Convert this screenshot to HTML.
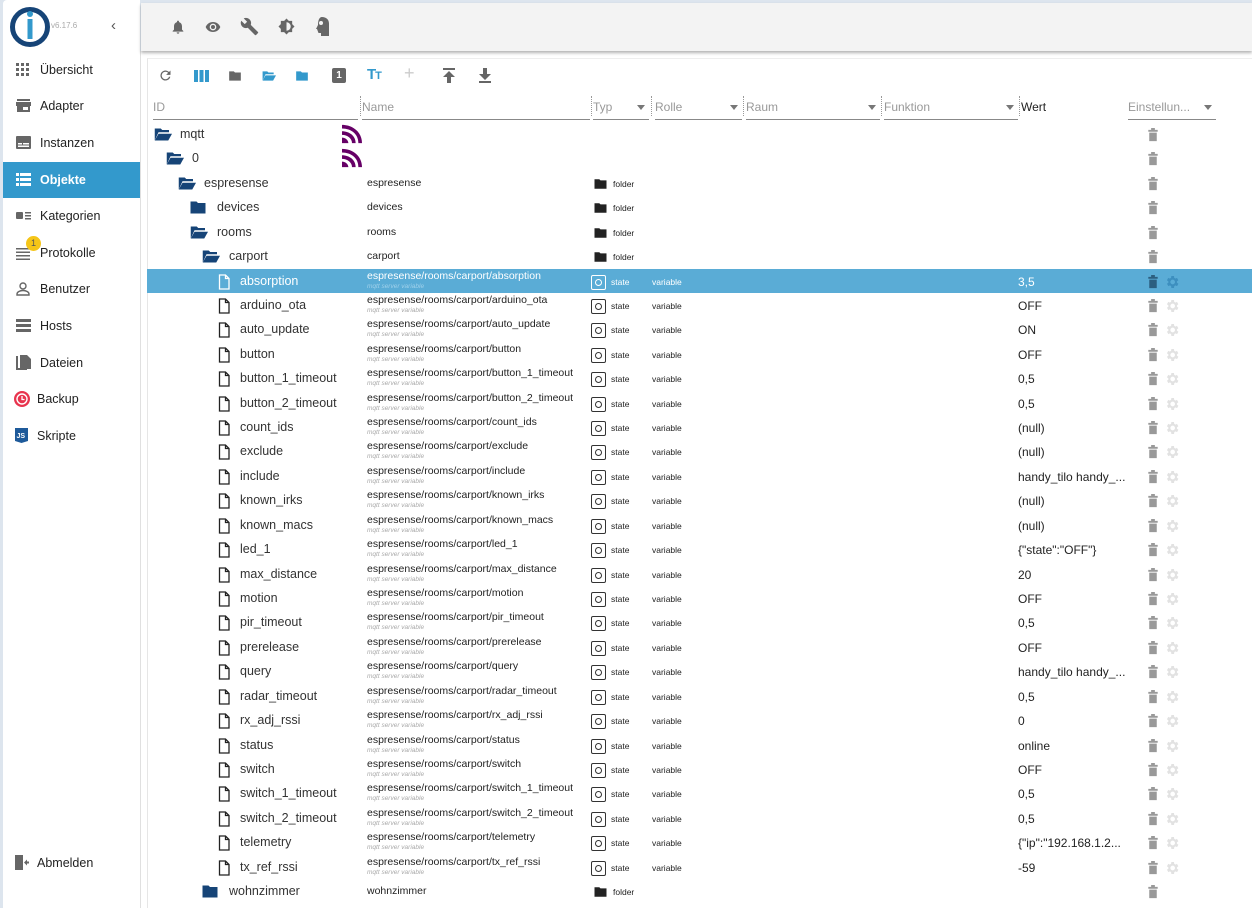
<!DOCTYPE html>
<html><head><meta charset="utf-8"><style>
*{box-sizing:border-box;margin:0;padding:0}
body{width:1252px;height:908px;overflow:hidden;background:#dde5ee;font-family:"Liberation Sans",sans-serif;position:relative;color:#333}
.side{position:absolute;left:3px;top:0;width:137px;height:908px;background:#fff;border-radius:4px 0 0 0}
.si{position:absolute;left:0;width:137px;height:36px;font-size:12.5px;color:#222;line-height:36px;padding-left:37px}
.si svg{position:absolute;left:13px;top:11px}
.si.on{background:#3399cc;color:#fff;font-weight:bold}
.top{position:absolute;left:141px;top:3px;width:1111px;height:48px;background:#f3f3f3;box-shadow:0 2px 3px rgba(0,0,0,.3);z-index:2}
.main{position:absolute;left:140px;top:51px;width:1112px;height:857px;background:#fff;border-left:1px solid #e0e0e0}
.panel{position:absolute;left:147px;top:58px;width:1105px;height:850px;background:#fff;border-left:1px solid #e6e6e6;border-top:1px solid #eee}
.ab{position:absolute}
.hd{position:absolute;top:96px;height:24px;font-size:12px;color:#999;line-height:22px;border-bottom:1px solid #888}
.hd .ar{position:absolute;right:4px;top:9px;width:0;height:0;border-left:4px solid transparent;border-right:4px solid transparent;border-top:5px solid #777}
.r{position:absolute;left:147px;width:1105px;height:24.4px}
.r.sel{background:#5aacd6}
.r .i{position:absolute;top:5px}
.r .t{position:absolute;top:5px;font-size:12.5px;color:#333;white-space:nowrap}
.r .n{position:absolute;left:220px;top:1px;font-size:10.5px;color:#222;white-space:nowrap}
.r .s{position:absolute;left:220px;top:14px;font-size:6.5px;color:#aaa;font-style:italic}
.r .ty{position:absolute;left:444px;top:6px;width:15px;height:15px;border:1px solid #333;border-radius:2px}
.r .ty:after{content:"";position:absolute;left:3px;top:3px;width:5px;height:5px;border:1px solid #333;border-radius:50%}
.r .tyt{position:absolute;left:464px;top:8px;font-size:8.5px;color:#222}
.r .ro{position:absolute;left:505px;top:8px;font-size:8.5px;color:#222}
.r .fo{position:absolute;left:446px;top:7px}
.r .fot{position:absolute;left:466px;top:8px;font-size:8.5px;color:#222}
.r .w{position:absolute;left:871px;top:6px;font-size:12px;color:#222}
.r .tr{position:absolute;left:1000px;top:5px}
.r .g{position:absolute;left:1017px;top:5px}
.sel .t,.sel .n,.sel .tyt,.sel .ro,.sel .w{color:#fff}
.sel .s{color:#9fd0ea}
.sel .ty,.sel .ty:after{border-color:#fff}
</style></head><body>
<svg width="0" height="0" style="position:absolute">
<defs>
<symbol id="fo" viewBox="0 0 24 20"><path d="M2 2h8l2 2h10v14H2z" fill="#164477"/></symbol>
<symbol id="fopen" viewBox="0 0 24 20"><path d="M1 2h8l2 2h9v3H6L1 18z" fill="#164477"/><path d="M6 9h18l-5 9H1z" fill="#164477"/></symbol>
<symbol id="fil" viewBox="0 0 12 16"><path d="M1.5 1h6l3.5 3.5V15h-9.5z M7.5 1v3.5H11" fill="none" stroke="#222" stroke-width="1.3"/></symbol>
<symbol id="filw" viewBox="0 0 12 16"><path d="M1.5 1h6l3.5 3.5V15h-9.5z M7.5 1v3.5H11" fill="none" stroke="#fff" stroke-width="1.3"/></symbol>
<symbol id="blk" viewBox="0 0 24 20"><path d="M2 2h8l2 2h10v14H2z" fill="#222"/></symbol>
<symbol id="tr" viewBox="0 0 12 16"><path d="M1 3h10v2H1z M4 1h4v2H4z M2 6h8v9H2z" fill="#999"/></symbol>
<symbol id="trd" viewBox="0 0 12 16"><path d="M1 3h10v2H1z M4 1h4v2H4z M2 6h8v9H2z" fill="#2c5f80"/></symbol>
<symbol id="gr" viewBox="0 0 24 24"><path d="M19.4 13a7.5 7.5 0 000-2l2.1-1.6-2-3.5-2.5 1a7 7 0 00-1.7-1L15 3h-4l-.4 2.9a7 7 0 00-1.7 1l-2.5-1-2 3.5L6.6 11a7.5 7.5 0 000 2l-2.1 1.6 2 3.5 2.5-1a7 7 0 001.7 1L11 21h4l.4-2.9a7 7 0 001.7-1l2.5 1 2-3.5zM13 15.5a3.5 3.5 0 110-7 3.5 3.5 0 010 7z" fill="#e2e2e2"/></symbol>
<symbol id="grd" viewBox="0 0 24 24"><path d="M19.4 13a7.5 7.5 0 000-2l2.1-1.6-2-3.5-2.5 1a7 7 0 00-1.7-1L15 3h-4l-.4 2.9a7 7 0 00-1.7 1l-2.5-1-2 3.5L6.6 11a7.5 7.5 0 000 2l-2.1 1.6 2 3.5 2.5-1a7 7 0 001.7 1L11 21h4l.4-2.9a7 7 0 001.7-1l2.5 1 2-3.5zM13 15.5a3.5 3.5 0 110-7 3.5 3.5 0 010 7z" fill="#3d8fbf"/></symbol>
<symbol id="mq" viewBox="0 0 22 20"><rect width="22" height="20" fill="#fff"/><path d="M0 0c12 0 22 8 22 20h-4C18 10 10 4 0 4z M0 7c8 0 15 5 15 13h-4c0-5-5-9-11-9z M0 14c4 0 7 3 7 6H0z" fill="#660066"/></symbol>
</defs></svg>

<div class="main"></div>
<div class="side">
  <svg class="ab" style="left:6px;top:6px" width="42" height="42" viewBox="0 0 42 42"><circle cx="21" cy="21" r="17.5" fill="none" stroke="#164477" stroke-width="5"/><rect x="18.5" y="13" width="5" height="20" fill="#3399cc"/><circle cx="21" cy="8" r="3" fill="#3399cc"/></svg>
  <div class="ab" style="left:48px;top:21px;font-size:8px;color:#aaa">v6.17.6</div>
  <div class="ab" style="left:108px;top:17px;font-size:15px;color:#555">&#8249;</div>
  <div class="si" style="top:52px"><svg width="14" height="14" viewBox="0 0 14 14" fill="#666"><rect x="0" y="0" width="3" height="3"/><rect x="5" y="0" width="3" height="3"/><rect x="10" y="0" width="3" height="3"/><rect x="0" y="5" width="3" height="3"/><rect x="5" y="5" width="3" height="3"/><rect x="10" y="5" width="3" height="3"/><rect x="0" y="10" width="3" height="3"/><rect x="5" y="10" width="3" height="3"/><rect x="10" y="10" width="3" height="3"/></svg>Übersicht</div>
  <div class="si" style="top:88px"><svg width="15" height="14" viewBox="0 0 15 14" fill="#666"><rect x="1" y="0" width="13" height="2"/><path d="M0 3h15v4H0z"/><rect x="1" y="7" width="13" height="6"/><rect x="7" y="8" width="5" height="3" fill="#fff"/></svg>Adapter</div>
  <div class="si" style="top:125px"><svg width="15" height="13" viewBox="0 0 15 13"><rect width="15" height="13" rx="1" fill="#666"/><rect x="2" y="7" width="4" height="1.5" fill="#fff"/><rect x="7" y="7" width="6" height="1.5" fill="#fff"/><rect x="2" y="9.5" width="11" height="1.5" fill="#fff"/></svg>Instanzen</div>
  <div class="si on" style="top:162px"><svg width="15" height="13" viewBox="0 0 15 13" fill="#fff"><rect x="0" y="0" width="3" height="3"/><rect x="4" y="0" width="11" height="3"/><rect x="0" y="5" width="3" height="3"/><rect x="4" y="5" width="11" height="3"/><rect x="0" y="10" width="3" height="3"/><rect x="4" y="10" width="11" height="3"/></svg>Objekte</div>
  <div class="si" style="top:198px"><svg width="15" height="10" viewBox="0 0 15 10" fill="#666" style="top:13px"><rect x="0" y="1" width="7" height="7" rx="1"/><rect x="9" y="1" width="6" height="1.5"/><rect x="9" y="4" width="6" height="1.5"/><rect x="9" y="7" width="6" height="1.5"/></svg>Kategorien</div>
  <div class="si" style="top:235px"><svg width="14" height="12" viewBox="0 0 14 12" fill="#666" style="top:13px"><rect y="0" width="14" height="1.5"/><rect y="3.5" width="14" height="1.5"/><rect y="7" width="14" height="1.5"/><rect y="10.5" width="14" height="1.5"/></svg><span style="position:absolute;left:23px;top:1px;width:15px;height:15px;border-radius:50%;background:#f5c518;font-size:9px;line-height:14px;text-align:center;color:#555;font-weight:normal">1</span>Protokolle</div>
  <div class="si" style="top:271px"><svg width="14" height="14" viewBox="0 0 14 14" fill="none" stroke="#666" stroke-width="1.4"><circle cx="7" cy="4" r="3"/><path d="M1 13v-1c0-2 3-3.5 6-3.5s6 1.5 6 3.5v1z"/></svg>Benutzer</div>
  <div class="si" style="top:308px"><svg width="15" height="13" viewBox="0 0 15 13" fill="#666"><rect width="15" height="3"/><rect y="5" width="15" height="3"/><rect y="10" width="15" height="3"/></svg>Hosts</div>
  <div class="si" style="top:345px"><svg width="15" height="16" viewBox="0 0 15 16" fill="#666" style="top:10px"><path d="M0 1h2v12h9v2H0z"/><path d="M4 0h7l4 4v10H4z"/></svg>Dateien</div>
  <div class="si" style="top:381px;padding-left:34px"><svg width="16" height="16" viewBox="0 0 16 16" style="left:11px;top:10px"><circle cx="8" cy="8" r="8" fill="#e8344e"/><circle cx="8" cy="8" r="5" fill="none" stroke="#fff" stroke-width="1.4"/><path d="M8 5v3.5h2.5" stroke="#fff" stroke-width="1.3" fill="none"/></svg>Backup</div>
  <div class="si" style="top:418px;padding-left:34px"><svg width="13" height="15" viewBox="0 0 13 15" style="left:12px;top:10px"><path d="M0 0h13v13l-6.5 2L0 13z" fill="#1e5a9a"/><text x="1.5" y="10" font-size="7" fill="#fff" font-family="Liberation Sans" font-weight="bold">JS</text></svg>Skripte</div>
  <div class="si" style="top:845px;padding-left:34px"><svg width="14" height="15" viewBox="0 0 14 15" fill="#666" style="left:12px;top:10px"><path d="M0 0h8v15H0z"/><path d="M9 7.5l3-3v2h2v2h-2v2z"/></svg>Abmelden</div>
</div>

<div class="top">
  <svg class="ab" style="left:29px;top:16px" width="16" height="16" viewBox="0 0 24 24" fill="#666"><path d="M12 22a2 2 0 002-2h-4a2 2 0 002 2zm6-6V11c0-3-1.6-5.6-4.5-6.3V4a1.5 1.5 0 00-3 0v.7C7.6 5.4 6 8 6 11v5l-2 2v1h16v-1z"/></svg>
  <svg class="ab" style="left:63px;top:16px" width="18" height="16" viewBox="0 0 24 24" fill="#666"><path d="M12 4.5C7 4.5 2.7 7.6 1 12c1.7 4.4 6 7.5 11 7.5s9.3-3.1 11-7.5c-1.7-4.4-6-7.5-11-7.5zM12 17a5 5 0 110-10 5 5 0 010 10zm0-8a3 3 0 100 6 3 3 0 000-6z"/></svg>
  <svg class="ab" style="left:99px;top:14px" width="19" height="19" viewBox="0 0 24 24" fill="#666"><path d="M22.7 19l-9.1-9.1c.9-2.3.4-5-1.5-6.9-2-2-5-2.4-7.4-1.3L9 6 6 9 1.6 4.7C.4 7.1.9 10.1 2.9 12.1c1.9 1.9 4.6 2.4 6.9 1.5l9.1 9.1c.4.4 1 .4 1.4 0l2.3-2.3c.5-.4.5-1.1.1-1.4z"/></svg>
  <svg class="ab" style="left:137px;top:15px" width="17" height="17" viewBox="0 0 24 24" fill="#666"><path d="M20 8.7V4h-4.7L12 .7 8.7 4H4v4.7L.7 12 4 15.3V20h4.7l3.3 3.3 3.3-3.3H20v-4.7l3.3-3.3zM12 18V6a6 6 0 010 12z"/></svg>
  <svg class="ab" style="left:175px;top:14px" width="14" height="19" viewBox="0 0 14 19" fill="#666"><path d="M6 0c4 0 7 2.5 7 6.5V19H5v-3H2.5L1 12H0L2 8c0-4 1-8 4-8z"/><circle cx="5" cy="6" r="2" fill="#f3f3f3"/></svg>
</div>

<div class="panel"></div>
<!-- toolbar -->
<svg class="ab" style="left:158px;top:68px" width="15" height="15" viewBox="0 0 24 24" fill="#666"><path d="M17.6 6.4A8 8 0 1019.7 14h-2.1A6 6 0 1112 6c1.7 0 3.1.7 4.2 1.8L13 11h7V4z"/></svg>
<svg class="ab" style="left:194px;top:70px" width="15" height="12" viewBox="0 0 15 12" fill="#3399cc"><rect width="4" height="12"/><rect x="5.5" width="4" height="12"/><rect x="11" width="4" height="12"/></svg>
<svg class="ab" style="left:228px;top:70px" width="14" height="12" viewBox="0 0 24 20"><path d="M2 2h8l2 2h10v14H2z" fill="#666"/></svg>
<svg class="ab" style="left:262px;top:70px" width="14" height="12" viewBox="0 0 24 20"><path d="M1 2h8l2 2h9v3H6L1 18z" fill="#3399cc"/><path d="M6 9h18l-5 9H1z" fill="#3399cc"/></svg>
<svg class="ab" style="left:295px;top:70px" width="14" height="12" viewBox="0 0 24 20"><path d="M2 2h8l2 2h10v14H2z" fill="#3399cc"/></svg>
<div class="ab" style="left:332px;top:68px;width:14px;height:15px;background:#666;border-radius:2px;color:#fff;font-size:10px;font-weight:bold;text-align:center;line-height:15px">1</div>
<div class="ab" style="left:367px;top:66px;font-size:15px;font-weight:bold;color:#3399cc;letter-spacing:-1px">T<span style="font-size:11px">T</span></div>
<div class="ab" style="left:404px;top:63px;font-size:18px;color:#ccc">+</div>
<svg class="ab" style="left:443px;top:68px" width="12" height="15" viewBox="0 0 12 15" fill="#666"><rect width="12" height="2"/><path d="M6 3l6 6H8v6H4V9H0z"/></svg>
<svg class="ab" style="left:479px;top:68px" width="12" height="15" viewBox="0 0 12 15" fill="#666"><path d="M4 0h4v6h4l-6 6-6-6h4z"/><rect y="13" width="12" height="2"/></svg>

<!-- headers -->
<div class="hd" style="left:153px;width:205px">ID</div>
<div class="ab" style="left:360px;top:96px;height:20px;border-left:1px dotted #999"></div>
<div class="hd" style="left:362px;width:228px">Name</div>
<div class="ab" style="left:591px;top:96px;height:20px;border-left:1px dotted #999"></div>
<div class="hd" style="left:593px;width:56px">Typ<span class="ar"></span></div>
<div class="ab" style="left:651px;top:96px;height:20px;border-left:1px dotted #999"></div>
<div class="hd" style="left:655px;width:87px">Rolle<span class="ar"></span></div>
<div class="ab" style="left:743px;top:96px;height:20px;border-left:1px dotted #999"></div>
<div class="hd" style="left:746px;width:134px">Raum<span class="ar"></span></div>
<div class="ab" style="left:881px;top:96px;height:20px;border-left:1px dotted #999"></div>
<div class="hd" style="left:884px;width:134px">Funktion<span class="ar"></span></div>
<div class="ab" style="left:1019px;top:96px;height:20px;border-left:1px dotted #999"></div>
<div class="ab" style="left:1021px;top:96px;font-size:12px;color:#222;line-height:22px">Wert</div>
<div class="hd" style="left:1128px;width:88px">Einstellun...<span class="ar"></span></div>

<!-- rows -->
<div class="r" style="top:122px"><svg class="i" style="left:6px;top:5px" width="20" height="15"><use href="#fopen"/></svg><span class="t" style="left:33px">mqtt</span><svg class="ab" style="left:195px;top:1px" width="20" height="22"><use href="#mq"/></svg><svg class="tr" width="12" height="15"><use href="#tr"/></svg></div>
<div class="r" style="top:146.4px"><svg class="i" style="left:18px" width="20" height="15"><use href="#fopen"/></svg><span class="t" style="left:45px">0</span><svg class="ab" style="left:195px;top:1px" width="20" height="22"><use href="#mq"/></svg><svg class="tr" width="12" height="15"><use href="#tr"/></svg></div>
<div class="r" style="top:170.8px"><svg class="i" style="left:30px" width="20" height="15"><use href="#fopen"/></svg><span class="t" style="left:57px">espresense</span><span class="n" style="top:6px">espresense</span><svg class="fo" width="15" height="12"><use href="#blk"/></svg><span class="fot">folder</span><svg class="tr" width="12" height="15"><use href="#tr"/></svg></div>
<div class="r" style="top:195.3px"><svg class="i" style="left:42px" width="18" height="15"><use href="#fo"/></svg><span class="t" style="left:70px">devices</span><span class="n" style="top:6px">devices</span><svg class="fo" width="15" height="12"><use href="#blk"/></svg><span class="fot">folder</span><svg class="tr" width="12" height="15"><use href="#tr"/></svg></div>
<div class="r" style="top:219.7px"><svg class="i" style="left:42px" width="20" height="15"><use href="#fopen"/></svg><span class="t" style="left:70px">rooms</span><span class="n" style="top:6px">rooms</span><svg class="fo" width="15" height="12"><use href="#blk"/></svg><span class="fot">folder</span><svg class="tr" width="12" height="15"><use href="#tr"/></svg></div>
<div class="r" style="top:244.1px"><svg class="i" style="left:54px" width="20" height="15"><use href="#fopen"/></svg><span class="t" style="left:82px">carport</span><span class="n" style="top:6px">carport</span><svg class="fo" width="15" height="12"><use href="#blk"/></svg><span class="fot">folder</span><svg class="tr" width="12" height="15"><use href="#tr"/></svg></div>

<div class="r sel" style="top:268.5px"><svg class="i" style="left:71px" width="12" height="16"><use href="#filw"/></svg><span class="t" style="left:93px">absorption</span><span class="n">espresense/rooms/carport/absorption</span><span class="s">mqtt server variable</span><span class="ty"></span><span class="tyt">state</span><span class="ro">variable</span><span class="w">3,5</span><svg class="tr" width="12" height="15"><use href="#trd"/></svg><svg class="g" width="16" height="16"><use href="#grd"/></svg></div>
<div class="r" style="top:292.9px"><svg class="i" style="left:71px" width="12" height="16"><use href="#fil"/></svg><span class="t" style="left:93px">arduino_ota</span><span class="n">espresense/rooms/carport/arduino_ota</span><span class="s">mqtt server variable</span><span class="ty"></span><span class="tyt">state</span><span class="ro">variable</span><span class="w">OFF</span><svg class="tr" width="12" height="15"><use href="#tr"/></svg><svg class="g" width="16" height="16"><use href="#gr"/></svg></div>
<div class="r" style="top:317.3px"><svg class="i" style="left:71px" width="12" height="16"><use href="#fil"/></svg><span class="t" style="left:93px">auto_update</span><span class="n">espresense/rooms/carport/auto_update</span><span class="s">mqtt server variable</span><span class="ty"></span><span class="tyt">state</span><span class="ro">variable</span><span class="w">ON</span><svg class="tr" width="12" height="15"><use href="#tr"/></svg><svg class="g" width="16" height="16"><use href="#gr"/></svg></div>
<div class="r" style="top:341.8px"><svg class="i" style="left:71px" width="12" height="16"><use href="#fil"/></svg><span class="t" style="left:93px">button</span><span class="n">espresense/rooms/carport/button</span><span class="s">mqtt server variable</span><span class="ty"></span><span class="tyt">state</span><span class="ro">variable</span><span class="w">OFF</span><svg class="tr" width="12" height="15"><use href="#tr"/></svg><svg class="g" width="16" height="16"><use href="#gr"/></svg></div>
<div class="r" style="top:366.2px"><svg class="i" style="left:71px" width="12" height="16"><use href="#fil"/></svg><span class="t" style="left:93px">button_1_timeout</span><span class="n">espresense/rooms/carport/button_1_timeout</span><span class="s">mqtt server variable</span><span class="ty"></span><span class="tyt">state</span><span class="ro">variable</span><span class="w">0,5</span><svg class="tr" width="12" height="15"><use href="#tr"/></svg><svg class="g" width="16" height="16"><use href="#gr"/></svg></div>
<div class="r" style="top:390.6px"><svg class="i" style="left:71px" width="12" height="16"><use href="#fil"/></svg><span class="t" style="left:93px">button_2_timeout</span><span class="n">espresense/rooms/carport/button_2_timeout</span><span class="s">mqtt server variable</span><span class="ty"></span><span class="tyt">state</span><span class="ro">variable</span><span class="w">0,5</span><svg class="tr" width="12" height="15"><use href="#tr"/></svg><svg class="g" width="16" height="16"><use href="#gr"/></svg></div>
<div class="r" style="top:415px"><svg class="i" style="left:71px" width="12" height="16"><use href="#fil"/></svg><span class="t" style="left:93px">count_ids</span><span class="n">espresense/rooms/carport/count_ids</span><span class="s">mqtt server variable</span><span class="ty"></span><span class="tyt">state</span><span class="ro">variable</span><span class="w">(null)</span><svg class="tr" width="12" height="15"><use href="#tr"/></svg><svg class="g" width="16" height="16"><use href="#gr"/></svg></div>
<div class="r" style="top:439.4px"><svg class="i" style="left:71px" width="12" height="16"><use href="#fil"/></svg><span class="t" style="left:93px">exclude</span><span class="n">espresense/rooms/carport/exclude</span><span class="s">mqtt server variable</span><span class="ty"></span><span class="tyt">state</span><span class="ro">variable</span><span class="w">(null)</span><svg class="tr" width="12" height="15"><use href="#tr"/></svg><svg class="g" width="16" height="16"><use href="#gr"/></svg></div>
<div class="r" style="top:463.9px"><svg class="i" style="left:71px" width="12" height="16"><use href="#fil"/></svg><span class="t" style="left:93px">include</span><span class="n">espresense/rooms/carport/include</span><span class="s">mqtt server variable</span><span class="ty"></span><span class="tyt">state</span><span class="ro">variable</span><span class="w">handy_tilo handy_...</span><svg class="tr" width="12" height="15"><use href="#tr"/></svg><svg class="g" width="16" height="16"><use href="#gr"/></svg></div>
<div class="r" style="top:488.3px"><svg class="i" style="left:71px" width="12" height="16"><use href="#fil"/></svg><span class="t" style="left:93px">known_irks</span><span class="n">espresense/rooms/carport/known_irks</span><span class="s">mqtt server variable</span><span class="ty"></span><span class="tyt">state</span><span class="ro">variable</span><span class="w">(null)</span><svg class="tr" width="12" height="15"><use href="#tr"/></svg><svg class="g" width="16" height="16"><use href="#gr"/></svg></div>
<div class="r" style="top:512.7px"><svg class="i" style="left:71px" width="12" height="16"><use href="#fil"/></svg><span class="t" style="left:93px">known_macs</span><span class="n">espresense/rooms/carport/known_macs</span><span class="s">mqtt server variable</span><span class="ty"></span><span class="tyt">state</span><span class="ro">variable</span><span class="w">(null)</span><svg class="tr" width="12" height="15"><use href="#tr"/></svg><svg class="g" width="16" height="16"><use href="#gr"/></svg></div>
<div class="r" style="top:537.1px"><svg class="i" style="left:71px" width="12" height="16"><use href="#fil"/></svg><span class="t" style="left:93px">led_1</span><span class="n">espresense/rooms/carport/led_1</span><span class="s">mqtt server variable</span><span class="ty"></span><span class="tyt">state</span><span class="ro">variable</span><span class="w">{"state":"OFF"}</span><svg class="tr" width="12" height="15"><use href="#tr"/></svg><svg class="g" width="16" height="16"><use href="#gr"/></svg></div>
<div class="r" style="top:561.5px"><svg class="i" style="left:71px" width="12" height="16"><use href="#fil"/></svg><span class="t" style="left:93px">max_distance</span><span class="n">espresense/rooms/carport/max_distance</span><span class="s">mqtt server variable</span><span class="ty"></span><span class="tyt">state</span><span class="ro">variable</span><span class="w">20</span><svg class="tr" width="12" height="15"><use href="#tr"/></svg><svg class="g" width="16" height="16"><use href="#gr"/></svg></div>
<div class="r" style="top:585.9px"><svg class="i" style="left:71px" width="12" height="16"><use href="#fil"/></svg><span class="t" style="left:93px">motion</span><span class="n">espresense/rooms/carport/motion</span><span class="s">mqtt server variable</span><span class="ty"></span><span class="tyt">state</span><span class="ro">variable</span><span class="w">OFF</span><svg class="tr" width="12" height="15"><use href="#tr"/></svg><svg class="g" width="16" height="16"><use href="#gr"/></svg></div>
<div class="r" style="top:610.4px"><svg class="i" style="left:71px" width="12" height="16"><use href="#fil"/></svg><span class="t" style="left:93px">pir_timeout</span><span class="n">espresense/rooms/carport/pir_timeout</span><span class="s">mqtt server variable</span><span class="ty"></span><span class="tyt">state</span><span class="ro">variable</span><span class="w">0,5</span><svg class="tr" width="12" height="15"><use href="#tr"/></svg><svg class="g" width="16" height="16"><use href="#gr"/></svg></div>
<div class="r" style="top:634.8px"><svg class="i" style="left:71px" width="12" height="16"><use href="#fil"/></svg><span class="t" style="left:93px">prerelease</span><span class="n">espresense/rooms/carport/prerelease</span><span class="s">mqtt server variable</span><span class="ty"></span><span class="tyt">state</span><span class="ro">variable</span><span class="w">OFF</span><svg class="tr" width="12" height="15"><use href="#tr"/></svg><svg class="g" width="16" height="16"><use href="#gr"/></svg></div>
<div class="r" style="top:659.2px"><svg class="i" style="left:71px" width="12" height="16"><use href="#fil"/></svg><span class="t" style="left:93px">query</span><span class="n">espresense/rooms/carport/query</span><span class="s">mqtt server variable</span><span class="ty"></span><span class="tyt">state</span><span class="ro">variable</span><span class="w">handy_tilo handy_...</span><svg class="tr" width="12" height="15"><use href="#tr"/></svg><svg class="g" width="16" height="16"><use href="#gr"/></svg></div>
<div class="r" style="top:683.6px"><svg class="i" style="left:71px" width="12" height="16"><use href="#fil"/></svg><span class="t" style="left:93px">radar_timeout</span><span class="n">espresense/rooms/carport/radar_timeout</span><span class="s">mqtt server variable</span><span class="ty"></span><span class="tyt">state</span><span class="ro">variable</span><span class="w">0,5</span><svg class="tr" width="12" height="15"><use href="#tr"/></svg><svg class="g" width="16" height="16"><use href="#gr"/></svg></div>
<div class="r" style="top:708px"><svg class="i" style="left:71px" width="12" height="16"><use href="#fil"/></svg><span class="t" style="left:93px">rx_adj_rssi</span><span class="n">espresense/rooms/carport/rx_adj_rssi</span><span class="s">mqtt server variable</span><span class="ty"></span><span class="tyt">state</span><span class="ro">variable</span><span class="w">0</span><svg class="tr" width="12" height="15"><use href="#tr"/></svg><svg class="g" width="16" height="16"><use href="#gr"/></svg></div>
<div class="r" style="top:732.5px"><svg class="i" style="left:71px" width="12" height="16"><use href="#fil"/></svg><span class="t" style="left:93px">status</span><span class="n">espresense/rooms/carport/status</span><span class="s">mqtt server variable</span><span class="ty"></span><span class="tyt">state</span><span class="ro">variable</span><span class="w">online</span><svg class="tr" width="12" height="15"><use href="#tr"/></svg><svg class="g" width="16" height="16"><use href="#gr"/></svg></div>
<div class="r" style="top:756.9px"><svg class="i" style="left:71px" width="12" height="16"><use href="#fil"/></svg><span class="t" style="left:93px">switch</span><span class="n">espresense/rooms/carport/switch</span><span class="s">mqtt server variable</span><span class="ty"></span><span class="tyt">state</span><span class="ro">variable</span><span class="w">OFF</span><svg class="tr" width="12" height="15"><use href="#tr"/></svg><svg class="g" width="16" height="16"><use href="#gr"/></svg></div>
<div class="r" style="top:781.3px"><svg class="i" style="left:71px" width="12" height="16"><use href="#fil"/></svg><span class="t" style="left:93px">switch_1_timeout</span><span class="n">espresense/rooms/carport/switch_1_timeout</span><span class="s">mqtt server variable</span><span class="ty"></span><span class="tyt">state</span><span class="ro">variable</span><span class="w">0,5</span><svg class="tr" width="12" height="15"><use href="#tr"/></svg><svg class="g" width="16" height="16"><use href="#gr"/></svg></div>
<div class="r" style="top:805.7px"><svg class="i" style="left:71px" width="12" height="16"><use href="#fil"/></svg><span class="t" style="left:93px">switch_2_timeout</span><span class="n">espresense/rooms/carport/switch_2_timeout</span><span class="s">mqtt server variable</span><span class="ty"></span><span class="tyt">state</span><span class="ro">variable</span><span class="w">0,5</span><svg class="tr" width="12" height="15"><use href="#tr"/></svg><svg class="g" width="16" height="16"><use href="#gr"/></svg></div>
<div class="r" style="top:830.1px"><svg class="i" style="left:71px" width="12" height="16"><use href="#fil"/></svg><span class="t" style="left:93px">telemetry</span><span class="n">espresense/rooms/carport/telemetry</span><span class="s">mqtt server variable</span><span class="ty"></span><span class="tyt">state</span><span class="ro">variable</span><span class="w">{"ip":"192.168.1.2...</span><svg class="tr" width="12" height="15"><use href="#tr"/></svg><svg class="g" width="16" height="16"><use href="#gr"/></svg></div>
<div class="r" style="top:854.5px"><svg class="i" style="left:71px" width="12" height="16"><use href="#fil"/></svg><span class="t" style="left:93px">tx_ref_rssi</span><span class="n">espresense/rooms/carport/tx_ref_rssi</span><span class="s">mqtt server variable</span><span class="ty"></span><span class="tyt">state</span><span class="ro">variable</span><span class="w">-59</span><svg class="tr" width="12" height="15"><use href="#tr"/></svg><svg class="g" width="16" height="16"><use href="#gr"/></svg></div>
<div class="r" style="top:879px"><svg class="i" style="left:54px" width="18" height="15"><use href="#fo"/></svg><span class="t" style="left:82px">wohnzimmer</span><span class="n" style="top:6px">wohnzimmer</span><svg class="fo" width="15" height="12"><use href="#blk"/></svg><span class="fot">folder</span><svg class="tr" width="12" height="15"><use href="#tr"/></svg></div>
</body></html>
